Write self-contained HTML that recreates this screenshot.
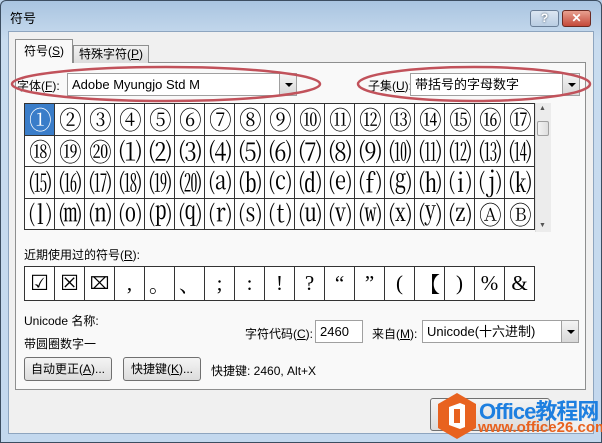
<!DOCTYPE html>
<html><head><meta charset="utf-8"><style>
*{margin:0;padding:0;box-sizing:border-box}
body{width:602px;height:443px;position:relative;overflow:hidden;background:#bcd3ea;font-family:"Liberation Sans","Noto Sans CJK SC",sans-serif;font-size:12px;color:#000}
.a{position:absolute}
.u{text-decoration:underline}
#frame{left:0;top:0;width:602px;height:443px;background:linear-gradient(#a9c4e0,#c9dcef 40px,#c3d8ee);border:1px solid #3c4d60;border-radius:6px 6px 0 0}
#client{left:8px;top:31px;width:586px;height:403px;background:#f0f0f0;border:1px solid #8ea5bf}
.btn{background:linear-gradient(#f4f4f4,#dcdcdc);border:1px solid #707070;border-radius:3px;text-align:center;line-height:22px}
.combo{background:#fff;border:1px solid #a0a0a0;line-height:21px;padding-left:4px;font-size:13px}
.dd{position:absolute;right:0;top:0;width:17px;height:100%;background:linear-gradient(#f4f4f4,#d8d8d8);border-left:1px solid #a0a0a0}
.dd:after{content:"";position:absolute;left:5px;top:9px;border:4px solid transparent;border-top:4px solid #000;border-bottom:0}
table{border-collapse:collapse;table-layout:fixed;background:#fff}
td{border:1px solid #333;text-align:center;padding:0;overflow:hidden;white-space:nowrap}
#g td{width:30px;height:31.5px;font-family:"Noto Serif CJK SC","Liberation Serif",serif;font-size:25px;line-height:30px;letter-spacing:-2px}
#g td span{display:inline-block;transform:scaleX(0.9)}
#r td{width:30px;height:34px;font-family:"Liberation Serif","Noto Serif CJK SC",serif;font-size:21px}
</style></head><body>
<div class="a" id="frame"></div>
<div class="a" style="left:10px;top:8px;font-size:13px">符号</div>
<div class="a" style="left:530px;top:10px;width:29px;height:17px;border:1px solid #6a7f98;border-radius:3px;background:linear-gradient(#dbe6f2,#b9cde3);text-align:center;font-weight:bold;color:#fff;font-size:12px;line-height:15px;text-shadow:0 0 2px #345">?</div>
<div class="a" style="left:562px;top:10px;width:29px;height:17px;border:1px solid #6b2a22;border-radius:3px;background:linear-gradient(#e8a090,#c4493a);text-align:center;font-weight:bold;color:#fff;font-size:12px;line-height:15px">✕</div>
<div class="a" id="client"></div>
<div class="a" style="left:15px;top:62px;width:571px;height:328px;border:1px solid #8e8f8f;background:#f9f9f9"></div>
<div class="a" style="left:73px;top:45px;width:76px;height:18px;border:1px solid #8e8f8f;border-bottom:0;background:linear-gradient(#f2f2f2,#dcdcdc);line-height:17px;text-align:center">特殊字符(<span class="u">P</span>)</div>
<div class="a" style="left:15px;top:39px;width:58px;height:24px;border:1px solid #8e8f8f;border-bottom:0;background:#f9f9f9;line-height:22px;text-align:center">符号(<span class="u">S</span>)</div>

<div class="a" style="left:17px;top:77px">字体(<span class="u">F</span>):</div>
<div class="a combo" style="left:67px;top:73px;width:230px;height:23px">Adobe Myungjo Std M<div class="dd"></div></div>
<div class="a" style="left:368px;top:77px">子集(<span class="u">U</span>):</div>
<div class="a combo" style="left:410px;top:73px;width:170px;height:23px">带括号的字母数字<div class="dd"></div></div>
<svg class="a" style="left:0;top:0" width="602" height="120"><ellipse cx="166" cy="84" rx="154" ry="17" fill="none" stroke="#c1525b" stroke-width="2.5"/><ellipse cx="474" cy="84" rx="116" ry="17" fill="none" stroke="#c1525b" stroke-width="2.5"/></svg>

<table id="g" class="a" style="left:24px;top:103px">
<tr><td style="background:#3a7dc9;color:#fff"><span>①</span></td><td><span>②</span></td><td><span>③</span></td><td><span>④</span></td><td><span>⑤</span></td><td><span>⑥</span></td><td><span>⑦</span></td><td><span>⑧</span></td><td><span>⑨</span></td><td><span>⑩</span></td><td><span>⑪</span></td><td><span>⑫</span></td><td><span>⑬</span></td><td><span>⑭</span></td><td><span>⑮</span></td><td><span>⑯</span></td><td><span>⑰</span></td></tr>
<tr><td><span>⑱</span></td><td><span>⑲</span></td><td><span>⑳</span></td><td><span>⑴</span></td><td><span>⑵</span></td><td><span>⑶</span></td><td><span>⑷</span></td><td><span>⑸</span></td><td><span>⑹</span></td><td><span>⑺</span></td><td><span>⑻</span></td><td><span>⑼</span></td><td><span>⑽</span></td><td><span>⑾</span></td><td><span>⑿</span></td><td><span>⒀</span></td><td><span>⒁</span></td></tr>
<tr><td><span>⒂</span></td><td><span>⒃</span></td><td><span>⒄</span></td><td><span>⒅</span></td><td><span>⒆</span></td><td><span>⒇</span></td><td><span>⒜</span></td><td><span>⒝</span></td><td><span>⒞</span></td><td><span>⒟</span></td><td><span>⒠</span></td><td><span>⒡</span></td><td><span>⒢</span></td><td><span>⒣</span></td><td><span>⒤</span></td><td><span>⒥</span></td><td><span>⒦</span></td></tr>
<tr><td><span>⒧</span></td><td><span>⒨</span></td><td><span>⒩</span></td><td><span>⒪</span></td><td><span>⒫</span></td><td><span>⒬</span></td><td><span>⒭</span></td><td><span>⒮</span></td><td><span>⒯</span></td><td><span>⒰</span></td><td><span>⒱</span></td><td><span>⒲</span></td><td><span>⒳</span></td><td><span>⒴</span></td><td><span>⒵</span></td><td><span>Ⓐ</span></td><td><span>Ⓑ</span></td></tr>
</table>
<div class="a" style="left:535px;top:103px;width:16px;height:129px;background:#ececec;border-left:1px solid #ddd"></div>
<div class="a" style="left:537px;top:121px;width:12px;height:15px;background:linear-gradient(90deg,#f4f4f4,#dedede);border:1px solid #a0a0a0;border-radius:2px"></div>
<div class="a" style="left:539px;top:105px;font-size:7px;color:#555">▲</div>
<div class="a" style="left:539px;top:222px;font-size:7px;color:#555">▼</div>

<div class="a" style="left:24px;top:246px">近期使用过的符号(<span class="u">R</span>):</div>
<table id="r" class="a" style="left:24px;top:266px">
<tr><td>☑</td><td>☒</td><td style="font-size:17px">⌧</td><td>,</td><td>。</td><td>、</td><td>;</td><td>:</td><td>!</td><td>?</td><td>“</td><td>”</td><td>(</td><td>【</td><td>)</td><td>%</td><td>&amp;</td></tr>
</table>

<div class="a" style="left:24px;top:312px">Unicode 名称:</div>
<div class="a" style="left:24px;top:335px">带圆圈数字一</div>
<div class="a" style="left:245px;top:325px">字符代码(<span class="u">C</span>):</div>
<div class="a combo" style="left:315px;top:320px;width:48px;height:23px">2460</div>
<div class="a" style="left:372px;top:325px">来自(<span class="u">M</span>):</div>
<div class="a combo" style="left:422px;top:320px;width:157px;height:23px">Unicode(十六进制)<div class="dd"></div></div>
<div class="a btn" style="left:24px;top:357px;width:88px;height:24px">自动更正(<span class="u">A</span>)...</div>
<div class="a btn" style="left:123px;top:357px;width:78px;height:24px">快捷键(<span class="u">K</span>)...</div>
<div class="a" style="left:211px;top:362px">快捷键: 2460, Alt+X</div>

<div class="a btn" style="left:430px;top:398px;width:120px;height:33px"></div>
<svg class="a" style="left:436px;top:392px" width="42" height="48"><polygon points="21,1 40,12 40,36 21,47 2,36 2,12" fill="#e8621f"/><path d="M13 15 L24 11 L29 13 L29 35 L24 37 L13 33 Z" fill="#fff"/><rect x="18" y="17" width="6" height="14" fill="#e8621f"/></svg>
<div class="a" style="left:479px;top:394px;font-size:22px;font-weight:bold;color:#1d7fe0;letter-spacing:-1px">Office教程网</div>
<div class="a" style="left:478px;top:419px;font-size:15px;font-weight:bold;color:#e8621f">www.office26.com</div>
</body></html>
